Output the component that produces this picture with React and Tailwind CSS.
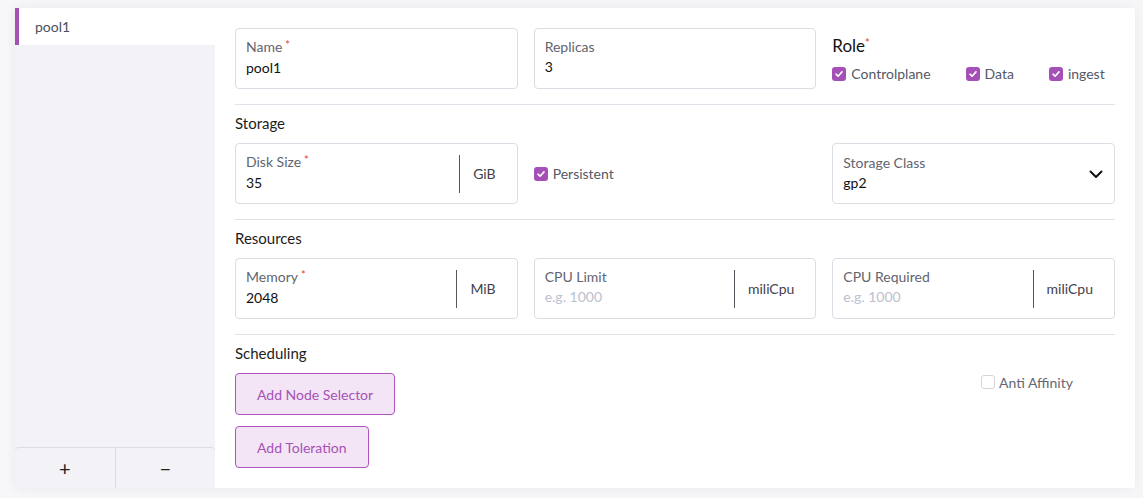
import React from 'react';

const Req = () => <span className="text-[#e53935] text-[11px] ml-[3px] relative -top-[3px]">*</span>;

const Check = ({ checked = true }) => (
  checked ? (
    <span className="w-[14px] h-[14px] rounded-[3px] bg-[#a450b6] flex items-center justify-center shrink-0">
      <svg width="10" height="10" viewBox="0 0 10 10" fill="none">
        <path d="M2 5.2 L4.1 7.2 L8 2.9" stroke="white" strokeWidth="1.6" strokeLinecap="round" strokeLinejoin="round" />
      </svg>
    </span>
  ) : (
    <span className="w-[14px] h-[14px] rounded-[3px] border border-[#d4d4de] bg-white shrink-0" />
  )
);

const Field = ({ label, required, value, placeholder, unit }) => (
  <div className="h-[61px] border border-[#dcdce5] rounded-[4px] flex bg-white">
    <div className="flex-1 pl-[10px] pt-[9px]">
      <div className="text-[14px] leading-[18px] text-[#62646f]">
        {label}
        {required && <Req />}
      </div>
      <div className={`text-[14px] leading-[20px] mt-[1px] ${value ? 'text-[#111]' : 'text-[#bcc0cf]'}`}>
        {value || placeholder}
      </div>
    </div>
    {unit && (
      <div className="flex items-center py-[10px]">
        <div className="w-px h-[38px] bg-[#55575f]" />
        <div className="pl-[13px] pr-[21px] text-[14px] text-[#3f414a]">{unit}</div>
      </div>
    )}
  </div>
);

const Section = ({ title, children }) => (
  <div className="border-t border-[#e2e2ea] mt-[15px]">
    <div className="mt-[8px] h-[20px] text-[15px] leading-[20px] text-[#1d1d22]">{title}</div>
    <div className="mt-[10px]">{children}</div>
  </div>
);

export default function App() {
  return (
    <div className="w-[1143px] h-[498px] bg-[#f7f7f9] pt-[8px] pl-[15px]" style={{ fontFamily: 'Lato, "Open Sans", sans-serif' }}>
      <div className="w-[1120px] h-[480px] flex shadow-[0_0_12px_rgba(0,0,0,0.06)]">
        <div className="w-[200px] bg-[#f2f2f7] flex flex-col">
          <div className="h-[37px] bg-white border-l-[4px] border-[#a450b6] pl-[16px] flex items-center text-[14px] text-[#4c4f5c]">
            pool1
          </div>
          <div className="flex-1" />
          <div className="h-[41px] flex border-t border-[#dcdce3] rounded-t-[4px]">
            <button className="flex-1 flex items-center justify-center text-[20px] text-[#222] border-r border-[#dcdce3]">+</button>
            <button className="flex-1 flex items-center justify-center text-[20px] text-[#222]">−</button>
          </div>
        </div>
        <div className="flex-1 bg-white px-[20px] pt-[20px]">
          <div className="grid grid-cols-3 gap-x-[16px]">
            <Field label="Name" required value="pool1" />
            <Field label="Replicas" value="3" />
            <div className="pt-[6px]">
              <div className="text-[17px] leading-[24px] text-[#111]">
                Role<span className="text-[#e53935] text-[11px] relative -top-[5px]">*</span>
              </div>
              <div className="flex items-center gap-[35px] mt-[3px] text-[14px] text-[#555866]">
                <label className="flex items-center gap-[5px]"><Check />Controlplane</label>
                <label className="flex items-center gap-[5px]"><Check />Data</label>
                <label className="flex items-center gap-[5px]"><Check />ingest</label>
              </div>
            </div>
          </div>

          <Section title="Storage">
            <div className="grid grid-cols-3 gap-x-[16px]">
              <Field label="Disk Size" required value="35" unit="GiB" />
              <label className="flex items-center gap-[5px] text-[14px] text-[#555866]"><Check />Persistent</label>
              <div className="h-[61px] border border-[#dcdce5] rounded-[4px] flex items-center pl-[10px] pr-[10px]">
                <div className="flex-1">
                  <div className="text-[14px] leading-[18px] text-[#62646f]">Storage Class</div>
                  <div className="text-[14px] leading-[20px] mt-[1px] text-[#111]">gp2</div>
                </div>
                <svg width="16" height="16" viewBox="0 0 16 16" fill="none">
                  <path d="M2.5 5.5 L8 11 L13.5 5.5" stroke="#111" strokeWidth="2" strokeLinecap="round" strokeLinejoin="round" />
                </svg>
              </div>
            </div>
          </Section>

          <Section title="Resources">
            <div className="grid grid-cols-3 gap-x-[16px]">
              <Field label="Memory" required value="2048" unit="MiB" />
              <Field label="CPU Limit" placeholder="e.g. 1000" unit="miliCpu" />
              <Field label="CPU Required" placeholder="e.g. 1000" unit="miliCpu" />
            </div>
          </Section>

          <Section title="Scheduling">
            <div className="flex justify-between">
              <div className="flex flex-col items-start gap-[11px]">
                <button className="h-[42px] px-[21px] rounded-[4px] border border-[#ab55bd] bg-[#f3e5f5] text-[14px] text-[#a453b6]">
                  Add Node Selector
                </button>
                <button className="h-[42px] px-[21px] rounded-[4px] border border-[#ab55bd] bg-[#f3e5f5] text-[14px] text-[#a453b6]">
                  Add Toleration
                </button>
              </div>
              <label className="w-[134px] h-[18px] flex items-center gap-[4px] text-[14px] text-[#656876]">
                <Check checked={false} />Anti Affinity
              </label>
            </div>
          </Section>
        </div>
      </div>
    </div>
  );
}
